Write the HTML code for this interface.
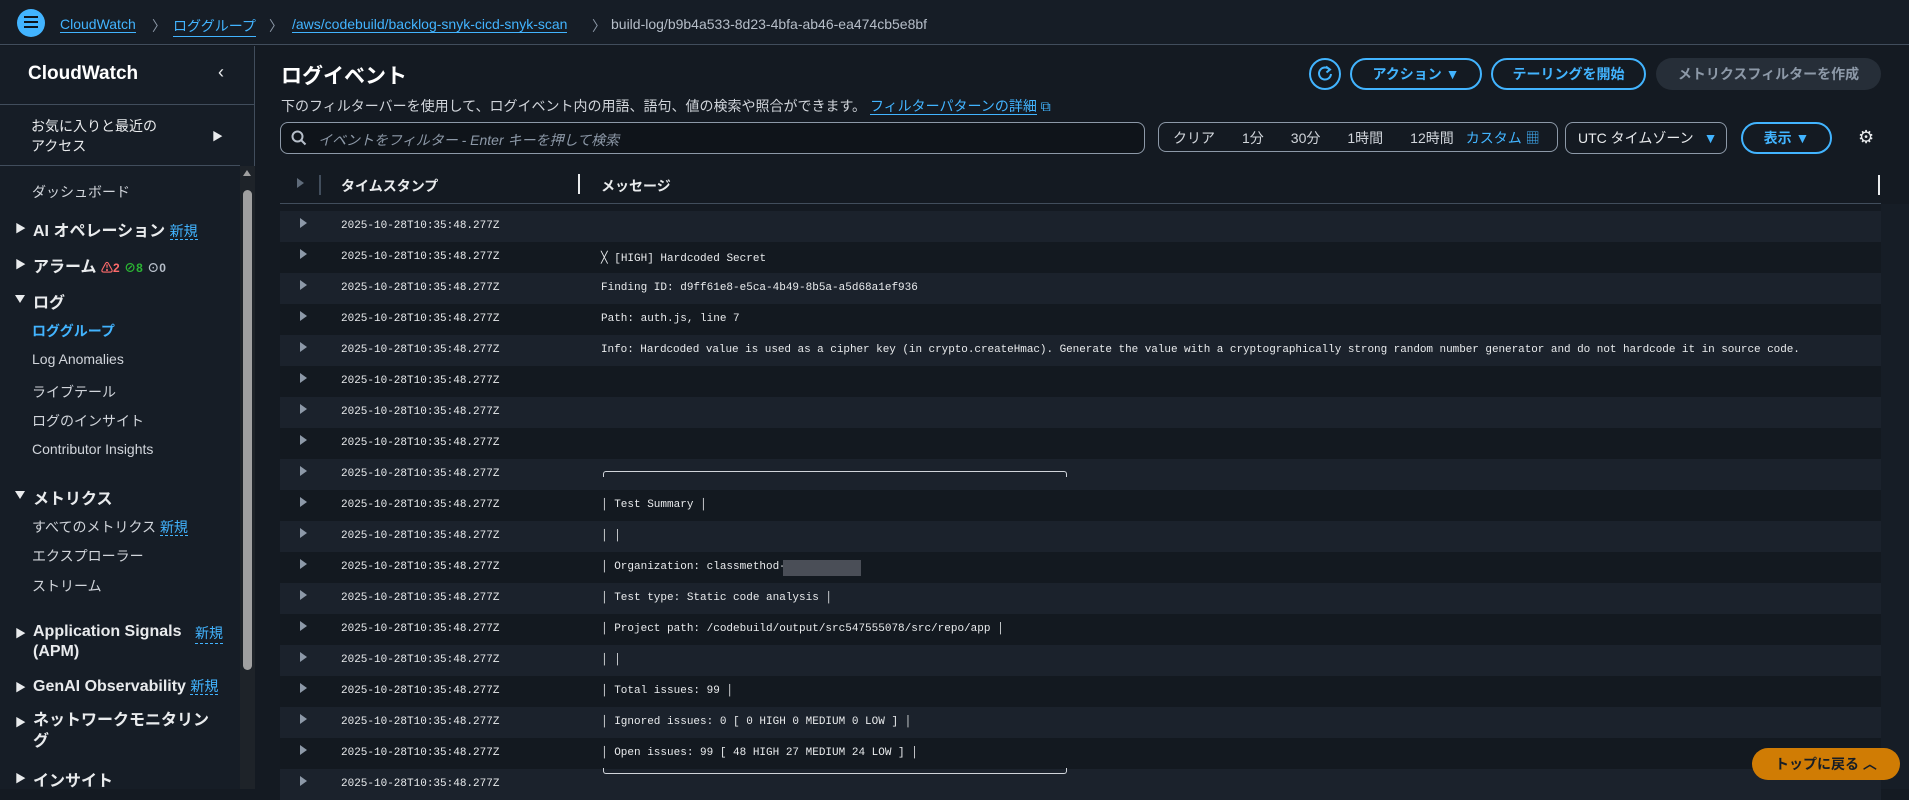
<!DOCTYPE html>
<html><head><meta charset="utf-8"><style>
*{margin:0;padding:0;box-sizing:border-box}
body{width:1909px;height:789px;overflow:hidden;background:#141a22;font-family:"Liberation Sans","Noto Sans CJK JP",sans-serif;color:#d1d5db;position:relative}
.a{position:absolute;white-space:nowrap}
.hdr{left:0;top:0;width:1909px;height:45px;background:#161d26;border-bottom:1px solid #414d5c}
.bc{top:16px;font-size:14px}
.lnk{color:#42b4ff;border-bottom:1px solid #42b4ff}
.sb{left:0;top:46px;width:255px;height:743px;background:#161d26;border-right:1px solid #414d5c}
.nav{font-size:14px;color:#d1d5db}
.sec{font-size:16px;font-weight:bold;color:#e9ebed}
.new{color:#42b4ff;border-bottom:1px dashed #42b4ff;font-size:14px;font-weight:normal}
.tri{font-size:11px;color:#e9ebed}
.dn{position:absolute;width:0;height:0;border-top:8px solid #e9ebed;border-left:5px solid transparent;border-right:5px solid transparent}
.btn{border:2px solid #42b4ff;border-radius:16px;color:#42b4ff;font-weight:bold;font-size:14px;text-align:center;height:32px;line-height:28px}
.row{left:280px;width:1601px;height:31px;font-family:"Liberation Mono",monospace;font-size:11px;color:#e9ebed}
.row span{position:absolute;top:9px}
.l{background:#1b222c}.d{background:#131920}
.rt{position:absolute;left:20px;top:7px;width:0;height:0;border-left:7px solid #8d99a8;border-top:5px solid transparent;border-bottom:5px solid transparent}
</style></head><body>
<div class="a hdr"></div>
<div class="a" style="left:17px;top:9px;width:28px;height:28px;border-radius:50%;background:#42b4ff"></div>
<div class="a" style="left:24px;top:16px;width:14px;height:2px;background:#0f141a;box-shadow:0 5px 0 #0f141a,0 10px 0 #0f141a"></div>
<div class="a bc lnk" style="left:60px">CloudWatch</div>
<div class="a bc" style="left:152px;color:#8d99a8">〉</div>
<div class="a bc lnk" style="left:173px">ロググループ</div>
<div class="a bc" style="left:269px;color:#8d99a8">〉</div>
<div class="a bc lnk" style="left:292px">/aws/codebuild/backlog-snyk-cicd-snyk-scan</div>
<div class="a bc" style="left:592px;color:#8d99a8">〉</div>
<div class="a bc" style="left:611px;color:#b6bec9">build-log/b9b4a533-8d23-4bfa-ab46-ea474cb5e8bf</div>

<div class="a sb"></div>
<div class="a" style="left:28px;top:63px;font-size:19px;font-weight:bold;color:#fff">CloudWatch</div>
<div class="a" style="left:218px;top:62px;font-size:18px;color:#e9ebed">‹</div>
<div class="a" style="left:0;top:104px;width:255px;height:1px;background:#414d5c"></div>
<div class="a nav" style="left:31px;top:116px;line-height:20px;color:#e9ebed">お気に入りと最近の<br>アクセス</div>
<div class="a tri" style="left:212px;top:128px">▶</div>
<div class="a" style="left:0;top:165px;width:240px;height:1px;background:#414d5c"></div>
<div class="a" style="left:240px;top:166px;width:15px;height:623px;background:#1e2329"></div>
<div class="a" style="left:243px;top:190px;width:9px;height:480px;border-radius:5px;background:#a0a0a0"></div>
<div class="a" style="left:243px;top:170px;width:0;height:0;border-bottom:6px solid #a0a0a0;border-left:4px solid transparent;border-right:4px solid transparent"></div>
<div class="a nav" style="left:32px;top:182px">ダッシュボード</div>
<div class="a tri" style="left:15px;top:220px">▶</div><div class="a sec" style="left:33px;top:217px">AI オペレーション <span class="new">新規</span></div>
<div class="a tri" style="left:15px;top:256px">▶</div><div class="a sec" style="left:33px;top:253px">アラーム <span style="font-size:12px;color:#ff6b6b">⚠2</span> <span style="font-size:12px;color:#2bb534">⊘8</span> <span style="font-size:12px;color:#b6bec9">⊙0</span></div>
<div class="dn" style="left:15px;top:295px"></div><div class="a sec" style="left:33px;top:289px">ログ</div>
<div class="a nav" style="left:32px;top:321px;color:#42b4ff;font-weight:bold">ロググループ</div>
<div class="a nav" style="left:32px;top:351px">Log Anomalies</div>
<div class="a nav" style="left:32px;top:382px">ライブテール</div>
<div class="a nav" style="left:32px;top:411px">ログのインサイト</div>
<div class="a nav" style="left:32px;top:441px">Contributor Insights</div>
<div class="dn" style="left:15px;top:491px"></div><div class="a sec" style="left:33px;top:485px">メトリクス</div>
<div class="a nav" style="left:32px;top:517px">すべてのメトリクス <span class="new">新規</span></div>
<div class="a nav" style="left:32px;top:546px">エクスプローラー</div>
<div class="a nav" style="left:32px;top:576px">ストリーム</div>
<div class="a tri" style="left:15px;top:625px">▶</div><div class="a sec" style="left:33px;top:622px;line-height:20px">Application Signals<br>(APM)</div><div class="a new" style="left:195px;top:623px">新規</div>
<div class="a tri" style="left:15px;top:679px">▶</div><div class="a sec" style="left:33px;top:676px">GenAI Observability <span class="new">新規</span></div>
<div class="a tri" style="left:15px;top:714px">▶</div><div class="a sec" style="left:33px;top:710px;line-height:21px">ネットワークモニタリン<br>グ</div>
<div class="a tri" style="left:15px;top:770px">▶</div><div class="a sec" style="left:33px;top:767px">インサイト</div>

<div class="a" style="left:281px;top:60px;font-size:21px;font-weight:bold;color:#fff">ログイベント</div>
<div class="a" style="left:281px;top:96px;font-size:14px;color:#d1d5db">下のフィルターバーを使用して、ログイベント内の用語、語句、値の検索や照合ができます。 <span class="lnk">フィルターパターンの詳細</span> <span style="color:#42b4ff">⧉</span></div>
<div class="a" style="left:1309px;top:58px;width:32px;height:32px;border:2px solid #42b4ff;border-radius:50%"></div>
<svg class="a" style="left:1314px;top:63px" width="22" height="22" viewBox="0 0 22 22"><path d="M15.5 6.5A6 6 0 1 0 17 11" fill="none" stroke="#42b4ff" stroke-width="2"/><path d="M12 3.5L16 6.5L12.5 9.5" fill="none" stroke="#42b4ff" stroke-width="2"/></svg>
<div class="a btn" style="left:1350px;top:58px;width:132px">アクション ▼</div>
<div class="a btn" style="left:1491px;top:58px;width:155px">テーリングを開始</div>
<div class="a" style="left:1656px;top:58px;width:225px;height:32px;border-radius:16px;background:#262e38;color:#8d99a8;font-weight:bold;font-size:14px;text-align:center;line-height:32px">メトリクスフィルターを作成</div>
<div class="a" style="left:280px;top:122px;width:865px;height:32px;border:1px solid #8d99a8;border-radius:8px;background:#0f141a"></div>
<svg class="a" style="left:291px;top:130px" width="16" height="16" viewBox="0 0 16 16"><circle cx="6.5" cy="6.5" r="5" fill="none" stroke="#b6bec9" stroke-width="2"/><path d="M10 10L14.5 14.5" stroke="#b6bec9" stroke-width="2"/></svg>
<div class="a" style="left:318px;top:130px;font-size:14px;color:#8d99a8;font-style:italic">イベントをフィルター - Enter キーを押して検索</div>
<div class="a" style="left:1158px;top:122px;width:400px;height:30px;border:1px solid #8d99a8;border-radius:8px"></div>
<div class="a" style="left:1173px;top:128px;font-size:14px;color:#d1d5db;word-spacing:0">クリア<span style="margin-left:27px">1分</span><span style="margin-left:27px">30分</span><span style="margin-left:27px">1時間</span><span style="margin-left:27px">12時間</span><span style="margin-left:12px;color:#42b4ff">カスタム ▦</span></div>
<div class="a" style="left:1565px;top:122px;width:162px;height:32px;border:1px solid #8d99a8;border-radius:8px;font-size:14px;line-height:30px;padding-left:12px;color:#e9ebed">UTC タイムゾーン <span style="color:#42b4ff;margin-left:6px">▼</span></div>
<div class="a btn" style="left:1741px;top:122px;width:91px">表示 ▼</div>
<div class="a" style="left:1858px;top:127px;font-size:18px;color:#e9ebed">⚙</div>

<div class="a" style="left:297px;top:178px;width:0;height:0;border-left:7px solid #5f6b7a;border-top:5px solid transparent;border-bottom:5px solid transparent"></div>
<div class="a" style="left:319px;top:175px;width:2px;height:20px;background:#414d5c"></div>
<div class="a" style="left:341px;top:176px;font-size:14px;font-weight:bold;color:#e9ebed">タイムスタンプ</div>
<div class="a" style="left:578px;top:174px;width:2px;height:20px;background:#e9ebed"></div>
<div class="a" style="left:601px;top:176px;font-size:14px;font-weight:bold;color:#e9ebed">メッセージ</div>
<div class="a" style="left:1878px;top:175px;width:2px;height:20px;background:#e9ebed"></div>
<div class="a" style="left:280px;top:203px;width:1601px;height:1px;background:#414d5c"></div>
<div class="a" style="left:1881px;top:204px;width:28px;height:585px;background:#161d26"></div>

<div class="a row l" style="top:211px"><i class="rt"></i><span style="left:61px">2025-10-28T10:35:48.277Z</span></div>
<div class="a row d" style="top:242px"><i class="rt"></i><span style="left:61px">2025-10-28T10:35:48.277Z</span><span style="left:321px">╳ [HIGH] Hardcoded Secret</span></div>
<div class="a row l" style="top:273px"><i class="rt"></i><span style="left:61px">2025-10-28T10:35:48.277Z</span><span style="left:321px">Finding ID: d9ff61e8-e5ca-4b49-8b5a-a5d68a1ef936</span></div>
<div class="a row d" style="top:304px"><i class="rt"></i><span style="left:61px">2025-10-28T10:35:48.277Z</span><span style="left:321px">Path: auth.js, line 7</span></div>
<div class="a row l" style="top:335px"><i class="rt"></i><span style="left:61px">2025-10-28T10:35:48.277Z</span><span style="left:321px;letter-spacing:-0.05px">Info: Hardcoded value is used as a cipher key (in crypto.createHmac). Generate the value with a cryptographically strong random number generator and do not hardcode it in source code.</span></div>
<div class="a row d" style="top:366px"><i class="rt"></i><span style="left:61px">2025-10-28T10:35:48.277Z</span></div>
<div class="a row l" style="top:397px"><i class="rt"></i><span style="left:61px">2025-10-28T10:35:48.277Z</span></div>
<div class="a row d" style="top:428px"><i class="rt"></i><span style="left:61px">2025-10-28T10:35:48.277Z</span></div>
<div class="a row l" style="top:459px"><i class="rt"></i><span style="left:61px">2025-10-28T10:35:48.277Z</span><i style="position:absolute;left:323px;top:12px;width:464px;height:6px;border:1px solid #d1d5db;border-bottom:none;border-radius:3px 3px 0 0"></i></div>
<div class="a row d" style="top:490px"><i class="rt"></i><span style="left:61px">2025-10-28T10:35:48.277Z</span><span style="left:321px">│ Test Summary │</span></div>
<div class="a row l" style="top:521px"><i class="rt"></i><span style="left:61px">2025-10-28T10:35:48.277Z</span><span style="left:321px">│ │</span></div>
<div class="a row d" style="top:552px"><i class="rt"></i><span style="left:61px">2025-10-28T10:35:48.277Z</span><span style="left:321px">│ Organization: classmethod-</span><i style="position:absolute;left:503px;top:8px;width:78px;height:16px;background:#4a4e57"></i></div>
<div class="a row l" style="top:583px"><i class="rt"></i><span style="left:61px">2025-10-28T10:35:48.277Z</span><span style="left:321px">│ Test type: Static code analysis │</span></div>
<div class="a row d" style="top:614px"><i class="rt"></i><span style="left:61px">2025-10-28T10:35:48.277Z</span><span style="left:321px">│ Project path: /codebuild/output/src547555078/src/repo/app │</span></div>
<div class="a row l" style="top:645px"><i class="rt"></i><span style="left:61px">2025-10-28T10:35:48.277Z</span><span style="left:321px">│ │</span></div>
<div class="a row d" style="top:676px"><i class="rt"></i><span style="left:61px">2025-10-28T10:35:48.277Z</span><span style="left:321px">│ Total issues: 99 │</span></div>
<div class="a row l" style="top:707px"><i class="rt"></i><span style="left:61px">2025-10-28T10:35:48.277Z</span><span style="left:321px">│ Ignored issues: 0 [ 0 HIGH 0 MEDIUM 0 LOW ] │</span></div>
<div class="a row d" style="top:738px"><i class="rt"></i><span style="left:61px">2025-10-28T10:35:48.277Z</span><span style="left:321px">│ Open issues: 99 [ 48 HIGH 27 MEDIUM 24 LOW ] │</span></div>
<div class="a row l" style="top:769px"><i class="rt"></i><span style="left:61px">2025-10-28T10:35:48.277Z</span><i style="position:absolute;left:323px;top:-1px;width:464px;height:6px;border:1px solid #d1d5db;border-top:none;border-radius:0 0 3px 3px"></i></div>

<div class="a" style="left:1752px;top:748px;width:148px;height:32px;border-radius:16px;background:#d07c04;color:#161d26;font-weight:bold;font-size:14px;line-height:32px;text-align:center">トップに戻る ︿</div>
</body></html>
